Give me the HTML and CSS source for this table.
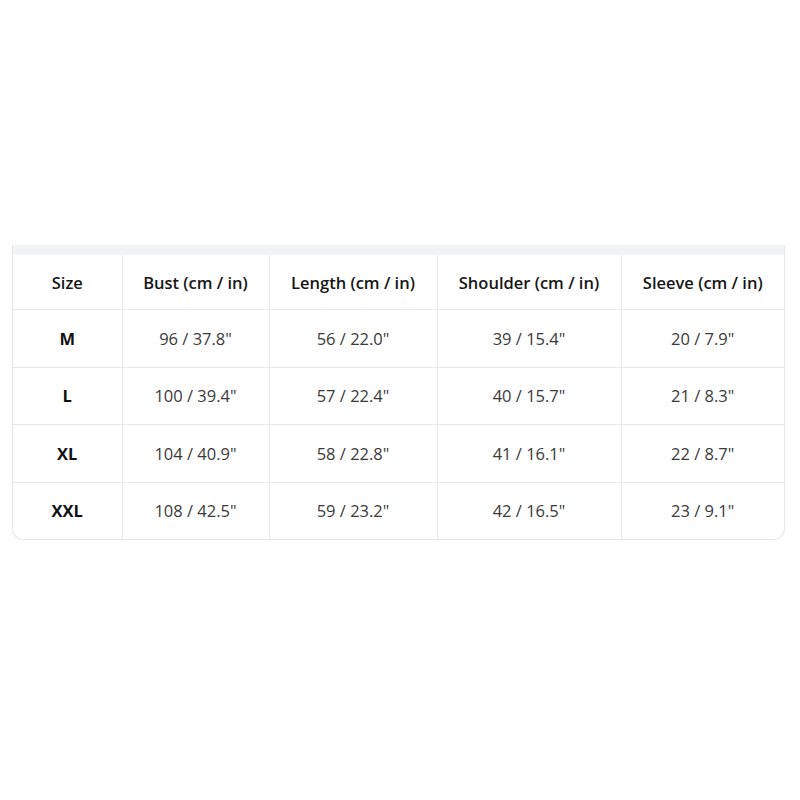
FILE: index.html
```html
<!DOCTYPE html>
<html>
<head>
<meta charset="utf-8">
<link rel="stylesheet" href="styles.css">
</head>
<body>
<div class="page">
  <div class="card">
    <div class="strip"></div>
    <table class="sizes">
      <colgroup>
        <col class="c1"><col class="c2"><col class="c3"><col class="c4"><col class="c5">
      </colgroup>
      <thead>
        <tr><th>Size</th><th>Bust (cm / in)</th><th>Length (cm / in)</th><th>Shoulder (cm / in)</th><th>Sleeve (cm / in)</th></tr>
      </thead>
      <tbody>
        <tr><td class="sz">M</td><td>96 / 37.8"</td><td>56 / 22.0"</td><td>39 / 15.4"</td><td>20 / 7.9"</td></tr>
        <tr><td class="sz">L</td><td>100 / 39.4"</td><td>57 / 22.4"</td><td>40 / 15.7"</td><td>21 / 8.3"</td></tr>
        <tr><td class="sz">XL</td><td>104 / 40.9"</td><td>58 / 22.8"</td><td>41 / 16.1"</td><td>22 / 8.7"</td></tr>
        <tr><td class="sz">XXL</td><td>108 / 42.5"</td><td>59 / 23.2"</td><td>42 / 16.5"</td><td>23 / 9.1"</td></tr>
      </tbody>
    </table>
  </div>
</div>
</body>
</html>
```

FILE: styles.css
```css
html, body {
  margin: 0;
  padding: 0;
  background: #ffffff;
}
.page {
  padding: 245px 15px 0 12px;
  font-family: "Open Sans", "Noto Sans", sans-serif;
}
.card {
  width: 771px;
  border: 1px solid #e8e8e8;
  border-top: none;
  border-radius: 0 0 12px 12px;
  box-shadow: 0 1px 3px rgba(0,0,0,0.04);
  background: #fff;
  overflow: hidden;
}
.strip {
  height: 10px;
  margin: 0 -1px;
  background: #f1f3f5;
}
.sizes {
  width: 771px;
  border-collapse: collapse;
  table-layout: fixed;
  border-style: hidden;
}
.c1 { width: 109px; }
.c2 { width: 147px; }
.c3 { width: 168px; }
.c4 { width: 184px; }
.c5 { width: 163px; }
.sizes th, .sizes td {
  border: 1px solid #e8e8e8;
  text-align: center;
  padding: 0;
}
.sizes thead th {
  border-top: 1px solid #e8e8e8;
}
.sizes th {
  height: 54px;
  font-size: 16.5px;
  font-weight: 600;
  color: #161616;
}
.sizes td {
  height: 56.5px;
  font-size: 16.5px;
  font-weight: 400;
  color: #3a3a3a;
}
.sizes td.sz {
  font-weight: 700;
  color: #111;
}
```
